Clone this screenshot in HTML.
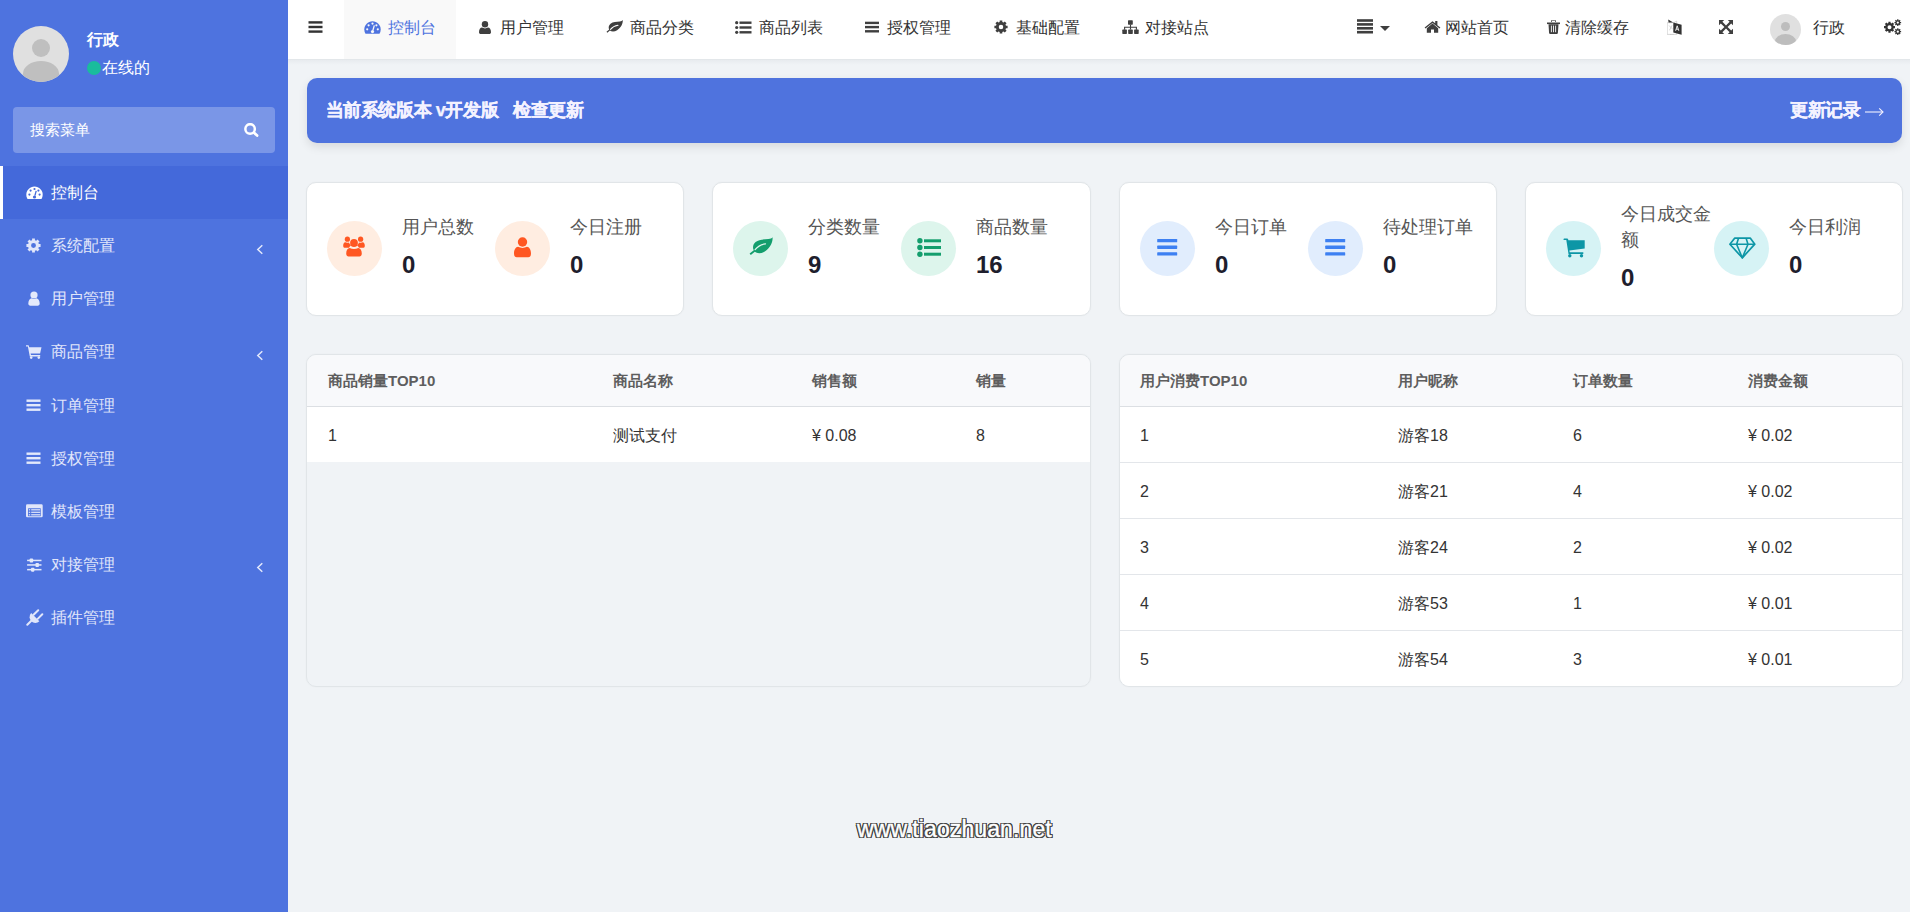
<!DOCTYPE html>
<html><head><meta charset="utf-8">
<style>
*{box-sizing:border-box;margin:0;padding:0}
html,body{width:1910px;height:912px;overflow:hidden}
body{font-family:"Liberation Sans",sans-serif;background:#f0f3f6;position:relative;color:#333}
.abs{position:absolute}
svg{display:block}
/* sidebar */
#side{position:absolute;left:0;top:0;width:288px;height:912px;background:#4e73df}
.avatar{position:absolute;left:13px;top:26px;width:56px;height:56px;border-radius:50%;background:#e0e0e0;overflow:hidden}
.avatar .h{position:absolute;left:19px;top:13px;width:18px;height:18px;border-radius:50%;background:#bfbfbf}
.avatar .b{position:absolute;left:10px;top:35px;width:36px;height:28px;border-radius:50%/45%;background:#bfbfbf}
.uname{position:absolute;left:87px;top:28px;font-size:16px;font-weight:bold;color:#fff;line-height:24px}
.online{position:absolute;left:87px;top:56px;font-size:16px;color:#fff;line-height:24px;white-space:nowrap}
.online i{display:inline-block;width:14px;height:14px;border-radius:50%;background:#1abc9c;vertical-align:-1.5px;margin-right:1px}
.search{position:absolute;left:13px;top:107px;width:262px;height:46px;border-radius:4px;background:rgba(255,255,255,.25)}
.search span{position:absolute;left:17px;top:0;line-height:46px;font-size:15px;color:#fff}
.search svg{position:absolute;left:231px;top:16px}
.menu{position:absolute;left:0;top:166px;width:288px}
.mi{position:relative;height:53.125px;color:#e1e6fa;font-size:16px}
.mi.act{color:#fff}
.mi.act{background:#4469da}
.mi.act:before{content:"";position:absolute;left:0;top:0;width:3px;height:100%;background:#fff}
.mi .ic{position:absolute;left:26px;top:19px}
.mi .tx{position:absolute;left:51px;top:0;line-height:53px}
.mi .ar{position:absolute;left:256px;top:24.5px}
/* header */
#hdr{position:absolute;left:288px;top:0;width:1622px;height:59px;background:#fff}
#hdrline{position:absolute;left:288px;top:59px;width:1622px;height:1px;background:#e3e7ea}
#hdrsh{position:absolute;left:288px;top:60px;width:1622px;height:5px;background:linear-gradient(rgba(0,20,40,.035),rgba(0,20,40,0))}
.tabact{position:absolute;left:344px;top:0;width:112px;height:59px;background:#f9f9f9}
.ht{position:absolute;top:0;line-height:55px;font-size:16px;color:#333;white-space:nowrap}
.hi{position:absolute}
/* banner */
.banner{position:absolute;left:307px;top:78px;width:1595px;height:65px;background:#4f73de;border-radius:10px;box-shadow:0 4px 10px rgba(0,0,0,.10)}
.bt{position:absolute;top:95px;line-height:30px;font-size:18px;font-weight:bold;color:#f4f2ff;white-space:nowrap;letter-spacing:-0.4px;-webkit-text-stroke:0.25px #f4f2ff}
.banner .l{position:absolute;left:20px;top:0;line-height:63px;font-size:18px;font-weight:bold;color:#fff;white-space:nowrap}
.banner .r{position:absolute;right:20px;top:0;line-height:63px;font-size:18px;font-weight:bold;color:#fff;white-space:nowrap}
/* cards */
.card{position:absolute;top:182px;width:378px;height:134px;background:#fff;border:1px solid #e1e5e8;border-radius:10px;box-shadow:0 0 2px rgba(0,0,0,.04)}
.half{position:absolute;top:0;height:100%;width:168px;display:flex;align-items:center}
.circ{width:55px;height:55px;border-radius:50%;flex:none;position:relative;margin-right:20px;top:-0.5px}
.circ svg{position:absolute}
.lab{font-size:18px;color:#555;line-height:25.7px;width:93px}
.num{font-size:24px;font-weight:bold;color:#1e1e2d;line-height:36px;margin-top:6px}
/* tables */
.tcard{position:absolute;top:354px;height:333px;border:1px solid #e1e5e8;box-shadow:0 0 2px rgba(0,0,0,.04);border-radius:10px;overflow:hidden}
.thead{position:absolute;left:0;top:0;width:100%;height:52px;background:#f8f9fb;border-bottom:1px solid #dcdfe3}
.trow{position:absolute;left:0;width:100%;height:56px;background:#fff}
.trow.bd{border-bottom:1px solid #e3e6ea}
.th{position:absolute;top:0;line-height:51px;font-size:15px;font-weight:bold;color:#5e5e5e;white-space:nowrap}
.td{position:absolute;top:1px;line-height:55px;font-size:16px;color:#333;white-space:nowrap}
.wm{position:absolute;left:857px;top:814px;font-size:23px;color:#fff;line-height:30px;white-space:nowrap;letter-spacing:0.1px;-webkit-text-stroke:0.4px #fff;text-shadow:1px 0px 0 #444,-1px 0px 0 #444,0px 1px 0 #444,0px -1px 0 #444,1px 1px 0 #444,-1px -1px 0 #444,1px -1px 0 #444,-1px 1px 0 #444,1.2px 0.6px 0 #444,-1.2px 0.6px 0 #444,0.6px 1.2px 0 #444,0.6px -1.2px 0 #444,-0.6px 1.2px 0 #444,-0.6px -1.2px 0 #444,1.2px -0.6px 0 #444,-1.2px -0.6px 0 #444}
</style></head>
<body>
<div id="side">
  <div class="avatar"><div class="h"></div><div class="b"></div></div>
  <div class="uname">行政</div>
  <div class="online"><i></i>在线的</div>
  <div class="search"><span>搜索菜单</span>
    <svg width="16" height="16" viewBox="0 0 16 16"><circle cx="6.1" cy="5.9" r="4.75" fill="none" stroke="#fff" stroke-width="2.5"/><path d="M9.8 9.6l3.300 3" stroke="#fff" stroke-width="2.7" stroke-linecap="round"/></svg>
  </div>
  <div class="menu">
    <div class="mi act"><svg class="ic" style="top:20.2px" width="17" height="14" viewBox="0 0 17 14"><path d="M8.5 0.5C3.9 0.5 0.3 4.2 0.3 8.7c0 1.6.4 3.1 1.2 4.4h14c.8-1.3 1.2-2.8 1.2-4.4C16.7 4.2 13.1.5 8.5.5z" fill="#fff"/><circle cx="3.4" cy="8.6" r="1.1" fill="#4469da"/><circle cx="4.6" cy="4.6" r="1.1" fill="#4469da"/><circle cx="8.5" cy="3" r="1.1" fill="#4469da"/><circle cx="12.4" cy="4.6" r="1.1" fill="#4469da"/><circle cx="13.6" cy="8.6" r="1.1" fill="#4469da"/><path d="M10.2 4.8L8.9 9.6" stroke="#4469da" stroke-width="1.3"/><circle cx="8.5" cy="11" r="1.6" fill="#4469da"/></svg><span class="tx">控制台</span></div>
    <div class="mi"><svg class="ic" width="15" height="15" viewBox="0 0 16 16"><path fill-rule="evenodd" d="M13.71 6.51 L15.55 6.50 L15.55 9.50 L13.71 9.49 L13.09 10.98 L14.40 12.28 L12.28 14.40 L10.98 13.09 L9.49 13.71 L9.50 15.55 L6.50 15.55 L6.51 13.71 L5.02 13.09 L3.72 14.40 L1.60 12.28 L2.91 10.98 L2.29 9.49 L0.45 9.50 L0.45 6.50 L2.29 6.51 L2.91 5.02 L1.60 3.72 L3.72 1.60 L5.02 2.91 L6.51 2.29 L6.50 0.45 L9.50 0.45 L9.49 2.29 L10.98 2.91 L12.28 1.60 L14.40 3.72 L13.09 5.02Z M10.60 8.00 A2.6 2.6 0 1 0 5.40 8.00 A2.6 2.6 0 1 0 10.60 8.00Z" fill="#e1e6fa"/></svg><span class="tx">系统配置</span><svg class="ar" width="8" height="11" viewBox="0 0 8 11"><path d="M6.3 1.2L1.800 5.500l4.500 4.300" fill="none" stroke="#e3e9fb" stroke-width="1.5"/></svg></div>
    <div class="mi"><svg class="ic" style="left:28px" width="12" height="15" viewBox="0 0 12 15"><circle cx="6" cy="4" r="3.6" fill="#e3e9fb"/><path d="M0.3 12.5c0-3 1.6-5 3.4-5.2 1.5.9 3.1.9 4.6 0 1.8.2 3.4 2.2 3.4 5.2 0 1.4-.9 2.2-2 2.2H2.3C1.2 14.7.3 13.9.3 12.5z" fill="#e3e9fb"/></svg><span class="tx">用户管理</span></div>
    <div class="mi"><svg class="ic" width="16" height="15" viewBox="0 0 16 15"><path d="M0 1.2h2.6l.6 2H15.5l-1.4 6.2H4.6l.4 1.6h9.2v1.4H3.8L1.9 2.6H0z" fill="#e3e9fb"/><circle cx="5.2" cy="13.6" r="1.3" fill="#e3e9fb"/><circle cx="12.8" cy="13.6" r="1.3" fill="#e3e9fb"/></svg><span class="tx">商品管理</span><svg class="ar" width="8" height="11" viewBox="0 0 8 11"><path d="M6.3 1.2L1.800 5.500l4.500 4.300" fill="none" stroke="#e3e9fb" stroke-width="1.5"/></svg></div>
    <div class="mi"><svg class="ic" width="15" height="14" viewBox="0 0 15 14"><rect x="0.5" y="1.5" width="14" height="2.4" fill="#e3e9fb"/><rect x="0.5" y="6" width="14" height="2.4" fill="#e3e9fb"/><rect x="0.5" y="10.5" width="14" height="2.4" fill="#e3e9fb"/></svg><span class="tx">订单管理</span></div>
    <div class="mi"><svg class="ic" width="15" height="14" viewBox="0 0 15 14"><rect x="0.5" y="1.5" width="14" height="2.4" fill="#e3e9fb"/><rect x="0.5" y="6" width="14" height="2.4" fill="#e3e9fb"/><rect x="0.5" y="10.5" width="14" height="2.4" fill="#e3e9fb"/></svg><span class="tx">授权管理</span></div>
    <div class="mi"><svg class="ic" width="17" height="14" viewBox="0 0 17 14"><rect x="0" y="0.3" width="16.7" height="13" rx="1.3" fill="#e1e6fa"/><rect x="2" y="4.3" width="12.8" height="7.9" rx=".4" fill="#4e73df"/><rect x="2.8" y="5.2" width="1.4" height="1.2" fill="#e1e6fa"/><rect x="5.2" y="5.2" width="9" height="1.2" fill="#e1e6fa"/><rect x="2.8" y="7.7" width="1.4" height="1.2" fill="#e1e6fa"/><rect x="5.2" y="7.7" width="9" height="1.2" fill="#e1e6fa"/><rect x="2.8" y="10.2" width="1.4" height="1.2" fill="#e1e6fa"/><rect x="5.2" y="10.2" width="9" height="1.2" fill="#e1e6fa"/></svg><span class="tx">模板管理</span></div>
    <div class="mi"><svg class="ic" width="16" height="16" viewBox="0 0 16 16"><rect x="1.1" y="2.7" width="14.4" height="1.5" fill="#e3e9fb"/><rect x="1.1" y="7.2" width="14.4" height="1.5" fill="#e3e9fb"/><rect x="1.1" y="11.9" width="14.4" height="1.5" fill="#e3e9fb"/><rect x="3.7" y="1.45" width="3.4" height="4" rx=".8" fill="#e3e9fb"/><rect x="9.5" y="5.95" width="3.4" height="4" rx=".8" fill="#e3e9fb"/><rect x="5" y="10.65" width="3.4" height="4" rx=".8" fill="#e3e9fb"/></svg><span class="tx">对接管理</span><svg class="ar" width="8" height="11" viewBox="0 0 8 11"><path d="M6.3 1.2L1.800 5.500l4.500 4.300" fill="none" stroke="#e3e9fb" stroke-width="1.5"/></svg></div>
    <div class="mi"><svg class="ic" style="left:25.5px;top:17.5px" width="18" height="17" viewBox="0 0 18 17"><path d="M1.3 15.7l4-4" stroke="#e1e6fa" stroke-width="2" stroke-linecap="round"/><path d="M5.2 4.1L13.4 12.3A5.8 5.8 0 0 1 5.2 4.1Z" fill="#e1e6fa"/><path d="M7.6 5.8L12.2 1.2M11.7 9.9L16.3 5.3" stroke="#e1e6fa" stroke-width="2" stroke-linecap="round"/></svg><span class="tx">插件管理</span></div>
  </div>
</div>

<div id="hdr"></div>
<div id="hdrline"></div><div id="hdrsh"></div>
<div class="tabact"></div>
<!-- header left -->
<svg class="hi" style="left:308px;top:21px" width="15" height="12" viewBox="0 0 15 12"><rect x="0.5" y="0.2" width="14" height="2.4" fill="#333"/><rect x="0.5" y="4.8" width="14" height="2.4" fill="#333"/><rect x="0.5" y="9.4" width="14" height="2.4" fill="#333"/></svg>
<svg class="hi" style="left:364px;top:21px" width="17" height="13" viewBox="0 0 17 13"><path d="M8.5 0.2C3.9 0.2 0.3 3.9 0.3 8.4c0 1.6.4 3.1 1.2 4.4h14c.8-1.3 1.2-2.8 1.2-4.4C16.7 3.9 13.1.2 8.5.2z" fill="#4e73df"/><circle cx="3.2" cy="8.3" r="1.1" fill="#f9f9f9"/><circle cx="4.6" cy="4.3" r="1.1" fill="#f9f9f9"/><circle cx="8.5" cy="2.6" r="1.1" fill="#f9f9f9"/><circle cx="12.4" cy="4.3" r="1.1" fill="#f9f9f9"/><circle cx="13.8" cy="8.3" r="1.1" fill="#f9f9f9"/><path d="M10.3 4.4L8.9 9.4" stroke="#f9f9f9" stroke-width="1.3"/><circle cx="8.5" cy="10.6" r="1.6" fill="#f9f9f9"/></svg>
<span class="ht" style="left:387.5px;color:#4e73df">控制台</span>
<svg class="hi" style="left:479px;top:21px" width="12" height="13" viewBox="0 0 12 13"><circle cx="6" cy="3.3" r="3.2" fill="#3f3f3f"/><path d="M0 11.2c0-2.8 1.4-4.5 3-4.6 1.9 1.1 4.1 1.1 6 0 1.6.1 3 1.8 3 4.6 0 1.2-.8 1.8-1.8 1.8H1.8C.8 13 0 12.4 0 11.2z" fill="#3f3f3f"/></svg>
<span class="ht" style="left:500px">用户管理</span>
<svg class="hi" style="left:606px;top:20px" width="17" height="13" viewBox="0 0 17 13"><path d="M16.8 0.1c-.6.9-1.6 1.3-3 1.5C10.5 2 7 1.6 4.5 3.8 2.4 5.6 2.3 8.2 3.2 9.6L.5 11.8l.8 1 2.6-2.2c1.6 1.2 4.5 1.4 7.2-.3C15.6 7.500 16.9 3 16.8.1z" fill="#3f3f3f"/><path d="M4.5 9.3C6.5 6.8 9 5.6 12 5.2" stroke="#fff" stroke-width="1.1" fill="none" stroke-linecap="round"/></svg>
<span class="ht" style="left:629.5px">商品分类</span>
<svg class="hi" style="left:735px;top:21px" width="17" height="13" viewBox="0 0 17 13"><circle cx="1.7" cy="1.7" r="1.6" fill="#3f3f3f"/><circle cx="1.7" cy="6.5" r="1.6" fill="#3f3f3f"/><circle cx="1.7" cy="11.3" r="1.6" fill="#3f3f3f"/><rect x="4.5" y="0.5" width="12" height="2.4" fill="#3f3f3f"/><rect x="4.5" y="5.3" width="12" height="2.4" fill="#3f3f3f"/><rect x="4.5" y="10.1" width="12" height="2.4" fill="#3f3f3f"/></svg>
<span class="ht" style="left:758.5px">商品列表</span>
<svg class="hi" style="left:865px;top:21px" width="14" height="12" viewBox="0 0 14 12"><rect x="0" y="0.7" width="14" height="2.4" fill="#3f3f3f"/><rect x="0" y="4.9" width="14" height="2.4" fill="#3f3f3f"/><rect x="0" y="9.1" width="14" height="2.4" fill="#3f3f3f"/></svg>
<span class="ht" style="left:887px">授权管理</span>
<svg class="hi" style="left:994px;top:20px" width="14" height="14" viewBox="0 0 16 16"><path fill-rule="evenodd" d="M13.71 6.51 L15.55 6.50 L15.55 9.50 L13.71 9.49 L13.09 10.98 L14.40 12.28 L12.28 14.40 L10.98 13.09 L9.49 13.71 L9.50 15.55 L6.50 15.55 L6.51 13.71 L5.02 13.09 L3.72 14.40 L1.60 12.28 L2.91 10.98 L2.29 9.49 L0.45 9.50 L0.45 6.50 L2.29 6.51 L2.91 5.02 L1.60 3.72 L3.72 1.60 L5.02 2.91 L6.51 2.29 L6.50 0.45 L9.50 0.45 L9.49 2.29 L10.98 2.91 L12.28 1.60 L14.40 3.72 L13.09 5.02Z M10.60 8.00 A2.6 2.6 0 1 0 5.40 8.00 A2.6 2.6 0 1 0 10.60 8.00Z" fill="#3f3f3f"/></svg>
<span class="ht" style="left:1016px">基础配置</span>
<svg class="hi" style="left:1121.5px;top:20px" width="17" height="14" viewBox="0 0 17 14"><rect x="6" y="0.3" width="4.8" height="4.4" rx=".6" fill="#3f3f3f"/><rect x="0.3" y="9.6" width="4.6" height="4.3" rx=".6" fill="#3f3f3f"/><rect x="6.2" y="9.6" width="4.6" height="4.3" rx=".6" fill="#3f3f3f"/><rect x="12.1" y="9.6" width="4.6" height="4.3" rx=".6" fill="#3f3f3f"/><path d="M8.5 4.5v5M2.6 9.8V7.2h11.8v2.6" stroke="#3f3f3f" stroke-width="1.1" fill="none"/></svg>
<span class="ht" style="left:1144.5px">对接站点</span>
<!-- header right -->
<svg class="hi" style="left:1357px;top:19px" width="16" height="15" viewBox="0 0 16 15"><rect x="0" y="0.2" width="16" height="2.6" fill="#3f3f3f"/><rect x="0" y="4.1" width="16" height="2.6" fill="#3f3f3f"/><rect x="0" y="8" width="16" height="2.6" fill="#3f3f3f"/><rect x="0" y="11.9" width="16" height="2.6" fill="#3f3f3f"/></svg>
<svg class="hi" style="left:1380px;top:26px" width="10" height="5" viewBox="0 0 10 5"><path d="M0 0h10L5 5z" fill="#3f3f3f"/></svg>
<svg class="hi" style="left:1424px;top:20px" width="17" height="13" viewBox="0 0 17 13"><path d="M8.5 1.2L.6 7.6l.9 1L8.5 3l7 5.6.9-1-3-2.4V1h-2.2v2.3z" fill="#3f3f3f"/><path d="M2.8 8.2L8.5 3.6l5.7 4.6v4.6H10V9.4H7v3.4H2.8z" fill="#3f3f3f"/></svg>
<span class="ht" style="left:1444.5px">网站首页</span>
<svg class="hi" style="left:1547px;top:20px" width="13" height="14" viewBox="0 0 13 14"><path d="M4.5 1.8V1c0-.5.4-.9.9-.9h2.2c.5 0 .9.4.9.9v.8" stroke="#3f3f3f" stroke-width="1" fill="none"/><rect x="0" y="2.5" width="13" height="1.6" fill="#3f3f3f"/><path d="M1.5 4.2h10l-.6 8.7c-.1.6-.5 1-1.1 1H3.2c-.6 0-1-.4-1.1-1z" fill="#3f3f3f"/><path d="M4.4 5.6v6.6M6.5 5.6v6.6M8.6 5.6v6.6" stroke="#fff" stroke-width=".9"/></svg>
<span class="ht" style="left:1564.5px">清除缓存</span>
<svg class="hi" style="left:1667px;top:19px" width="15" height="16" viewBox="0 0 15 16"><path d="M0.2 3.7h6.5l3-1.6v13.3H.2z" fill="none" stroke="#bbb" stroke-width=".6"/><path d="M6.3 3.5L1.2 0.6l.4 3z" fill="#333"/><path d="M6.3 3.5l8.3 2.3v10L6.3 13.5z" fill="#333"/><path d="M8.6 11.8l1.6-5 1.6 5M9.2 10.2h2" stroke="#fff" stroke-width=".9" fill="none"/><path d="M2 6.5l4 4M5 6.3l-2.5 5" stroke="#aaa" stroke-width=".5"/><path d="M3 15.2c1 .8 2.6.8 3.7.2" stroke="#bbb" stroke-width=".5" fill="none"/></svg>
<svg class="hi" style="left:1718.5px;top:20px" width="14" height="14" viewBox="0 0 14 14"><path d="M0 0h5.2L3.4 1.8 7 5.4l3.6-3.6L8.8 0H14v5.2l-1.8-1.8L8.6 7l3.6 3.6 1.8-1.8V14H8.8l1.8-1.8L7 8.6l-3.6 3.6L5.2 14H0V8.8l1.8 1.8L5.4 7 1.8 3.4 0 5.2z" fill="#3f3f3f"/></svg>
<div class="abs" style="left:1770px;top:14px;width:31px;height:31px;border-radius:50%;background:#e0e0e0;overflow:hidden"><div class="abs" style="left:10.5px;top:7.5px;width:9.5px;height:9.5px;border-radius:50%;background:#bdbdbd"></div><div class="abs" style="left:5px;top:19.5px;width:21px;height:15px;border-radius:50%;background:#bdbdbd"></div></div>
<span class="ht" style="left:1813px">行政</span>
<svg class="hi" style="left:1884px;top:19px" width="18" height="17" viewBox="0 0 18 17"><path fill-rule="evenodd" d="M9.66 7.11 L10.99 7.11 L10.99 9.29 L9.66 9.29 L9.21 10.37 L10.16 11.31 L8.61 12.86 L7.67 11.91 L6.59 12.36 L6.59 13.69 L4.41 13.69 L4.41 12.36 L3.33 11.91 L2.39 12.86 L0.84 11.31 L1.79 10.37 L1.34 9.29 L0.01 9.29 L0.01 7.11 L1.34 7.11 L1.79 6.03 L0.84 5.09 L2.39 3.54 L3.33 4.49 L4.41 4.04 L4.41 2.71 L6.59 2.71 L6.59 4.04 L7.67 4.49 L8.61 3.54 L10.16 5.09 L9.21 6.03Z M7.50 8.20 A2.0 2.0 0 1 0 3.50 8.20 A2.0 2.0 0 1 0 7.50 8.20Z M16.22 2.97 L17.13 2.94 L17.13 4.26 L16.22 4.23 L15.96 4.86 L16.63 5.49 L15.69 6.43 L15.06 5.76 L14.43 6.02 L14.46 6.93 L13.14 6.93 L13.17 6.02 L12.54 5.76 L11.91 6.43 L10.97 5.49 L11.64 4.86 L11.38 4.23 L10.47 4.26 L10.47 2.94 L11.38 2.97 L11.64 2.34 L10.97 1.71 L11.91 0.77 L12.54 1.44 L13.17 1.18 L13.14 0.27 L14.46 0.27 L14.43 1.18 L15.06 1.44 L15.69 0.77 L16.63 1.71 L15.96 2.34Z M14.95 3.60 A1.15 1.15 0 1 0 12.65 3.60 A1.15 1.15 0 1 0 14.95 3.60Z M16.22 12.07 L17.13 12.04 L17.13 13.36 L16.22 13.33 L15.96 13.96 L16.63 14.59 L15.69 15.53 L15.06 14.86 L14.43 15.12 L14.46 16.03 L13.14 16.03 L13.17 15.12 L12.54 14.86 L11.91 15.53 L10.97 14.59 L11.64 13.96 L11.38 13.33 L10.47 13.36 L10.47 12.04 L11.38 12.07 L11.64 11.44 L10.97 10.81 L11.91 9.87 L12.54 10.54 L13.17 10.28 L13.14 9.37 L14.46 9.37 L14.43 10.28 L15.06 10.54 L15.69 9.87 L16.63 10.81 L15.96 11.44Z M14.95 12.70 A1.15 1.15 0 1 0 12.65 12.70 A1.15 1.15 0 1 0 14.95 12.70Z" fill="#333"/></svg>

<!-- banner -->
<div class="banner"></div>
<span class="bt" style="left:325.5px">当前系统版本 v开发版</span><span class="bt" style="left:513px">检查更新</span><span class="bt" style="left:1790px">更新记录</span>
<svg class="abs" style="left:1864.5px;top:107.5px" width="19" height="8" viewBox="0 0 19 8"><path d="M0 4h17.6" stroke="#f3f1ff" stroke-width="1.1"/><path d="M14.2 .4L18 4l-3.8 3.6" stroke="#f3f1ff" stroke-width="1.1" fill="none"/></svg>

<!-- cards -->
<div class="card" style="left:306px">
  <div class="half" style="left:20px"><div class="circ" style="background:#ffede1"><svg style="left:16px;top:14.5px" width="22" height="21" viewBox="0 0 22 21"><circle cx="4.4" cy="3.2" r="2.6" fill="#ff5722"/><circle cx="17.6" cy="3.2" r="2.6" fill="#ff5722"/><path d="M0.2 9.5c0-1.8.9-3 2-3.2 1.3.6 2.6.6 3.8.1.3 1.1 1 2.2 2 2.9-.9.6-1.6 1.6-2 2.4H1.4C.7 11.7.2 11 .2 9.5z" fill="#ff5722"/><path d="M21.8 9.5c0-1.8-.9-3-2-3.2-1.3.6-2.6.6-3.8.1-.3 1.1-1 2.2-2 2.9.9.6 1.6 1.6 2 2.4h4.6c.7 0 1.2-.7 1.2-2.2z" fill="#ff5722"/><circle cx="11" cy="7" r="3.9" fill="#ff5722"/><path d="M3.2 17.6c0-3.500 1.6-5.500 3.5-5.700 2.6 1.300 6 1.300 8.6 0 1.900.2 3.500 2.200 3.500 5.700 0 1.900-1 2.900-2.300 2.900H5.500c-1.300 0-2.300-1-2.300-2.900z" fill="#ff5722"/></svg></div><div><div class="lab">用户总数</div><div class="num">0</div></div></div>
  <div class="half" style="left:188px"><div class="circ" style="background:#ffede1"><svg style="left:19px;top:15.5px" width="17" height="21" viewBox="0 0 17 21"><circle cx="8.5" cy="5" r="4.7" fill="#ff5722"/><path d="M0 16.6c0-4.200 1.800-6.500 4-6.800 2.800 1.500 6.200 1.500 9 0 2.200.3 4 2.600 4 6.800 0 2.400-1.200 3.600-2.700 3.600H2.700C1.200 20.200 0 19 0 16.6z" fill="#ff5722"/></svg></div><div><div class="lab">今日注册</div><div class="num">0</div></div></div>
</div>
<div class="card" style="left:712px;width:379px">
  <div class="half" style="left:20px"><div class="circ" style="background:#ddf5ec"><svg style="left:16px;top:15.5px" width="24" height="19" viewBox="0 0 24 19"><path d="M23.6 0.3c-.8 1.100-2.200 1.600-4.100 1.800C14.800 2.600 10 2.100 6.600 5.100 3.700 7.600 3.500 11.200 4.800 13.200L.6 16.400l1.200 1.500 4-3.100c2.300 1.700 6.300 2 10-.4 6.300-4.100 8-10.200 7.800-14.100z" fill="#139e6d"/><path d="M6.100 12.600C8.800 9.300 12.200 7.400 16.500 6.800" stroke="#ddf5ec" stroke-width="1.3" fill="none" stroke-linecap="round"/></svg></div><div><div class="lab">分类数量</div><div class="num">9</div></div></div>
  <div class="half" style="left:188px"><div class="circ" style="background:#ddf5ec"><svg style="left:16px;top:16.5px" width="24" height="19" viewBox="0 0 24 19"><circle cx="2.900" cy="2.800" r="2.700" fill="#139e6d"/><circle cx="2.900" cy="9.500" r="2.700" fill="#139e6d"/><circle cx="2.900" cy="16.200" r="2.700" fill="#139e6d"/><rect x="7" y="1.300" width="17" height="3" fill="#139e6d"/><rect x="7" y="8" width="17" height="3" fill="#139e6d"/><rect x="7" y="14.700" width="17" height="3" fill="#139e6d"/></svg></div><div><div class="lab">商品数量</div><div class="num">16</div></div></div>
</div>
<div class="card" style="left:1119px">
  <div class="half" style="left:20px"><div class="circ" style="background:#e1edfd"><svg style="left:17px;top:17.5px" width="21" height="17" viewBox="0 0 21 17"><rect x="0.200" y="0" width="20" height="3.300" rx=".6" fill="#3d80f2"/><rect x="0.200" y="6.600" width="20" height="3.300" rx=".6" fill="#3d80f2"/><rect x="0.200" y="13.300" width="20" height="3.300" rx=".6" fill="#3d80f2"/></svg></div><div><div class="lab">今日订单</div><div class="num">0</div></div></div>
  <div class="half" style="left:188px"><div class="circ" style="background:#e1edfd"><svg style="left:17px;top:17.5px" width="21" height="17" viewBox="0 0 21 17"><rect x="0.200" y="0" width="20" height="3.300" rx=".6" fill="#3d80f2"/><rect x="0.200" y="6.600" width="20" height="3.300" rx=".6" fill="#3d80f2"/><rect x="0.200" y="13.300" width="20" height="3.300" rx=".6" fill="#3d80f2"/></svg></div><div><div class="lab">待处理订单</div><div class="num">0</div></div></div>
</div>
<div class="card" style="left:1525px">
  <div class="half" style="left:20px"><div class="circ" style="background:#d6f3f5"><svg style="left:16.500px;top:17px" width="23" height="20" viewBox="0 0 23 20"><path d="M.5 1.500c0-.600.400-1 1-1h2.600c.600 0 1 .300 1.100.900l.200 .800h16.300v8.200l-15.300 2.200.300 1.700h13.600v1.600H5.500L3.300 2.100H1.500C.9 2.100.5 2.100.5 1.500z" fill="#0d96a6"/><circle cx="6.800" cy="17.800" r="1.700" fill="#0d96a6"/><circle cx="18.500" cy="17.800" r="1.700" fill="#0d96a6"/></svg></div><div><div class="lab">今日成交金额</div><div class="num">0</div></div></div>
  <div class="half" style="left:188px"><div class="circ" style="background:#d6f3f5"><svg style="left:15px;top:15.500px" width="27" height="22" viewBox="0 0 27 22"><path d="M5.600 1.200h15.800l4.400 6L13.300 20.800.9 7.200z" fill="none" stroke="#0d96a6" stroke-width="1.700" stroke-linejoin="round"/><path d="M1 7.200h25M9.500 1.200L7.600 7.200l5.700 13.600 5.700-13.600-1.900-6" fill="none" stroke="#0d96a6" stroke-width="1.600" stroke-linejoin="round"/></svg></div><div><div class="lab">今日利润</div><div class="num">0</div></div></div>
</div>

<!-- tables -->
<div class="tcard" style="left:306px;width:785px">
  <div class="thead"><span class="th" style="left:21px">商品销量TOP10</span><span class="th" style="left:306px">商品名称</span><span class="th" style="left:505px">销售额</span><span class="th" style="left:669px">销量</span></div>
  <div class="trow" style="top:52px;height:55px"><span class="td" style="left:21px">1</span><span class="td" style="left:306px">测试支付</span><span class="td" style="left:505px">¥ 0.08</span><span class="td" style="left:669px">8</span></div>
</div>
<div class="tcard" style="left:1119px;width:784px">
  <div class="thead"><span class="th" style="left:20px">用户消费TOP10</span><span class="th" style="left:278px">用户昵称</span><span class="th" style="left:453px">订单数量</span><span class="th" style="left:628px">消费金额</span></div>
  <div class="trow bd" style="top:52px"><span class="td" style="left:20px">1</span><span class="td" style="left:278px">游客18</span><span class="td" style="left:453px">6</span><span class="td" style="left:628px">¥ 0.02</span></div>
  <div class="trow bd" style="top:108px"><span class="td" style="left:20px">2</span><span class="td" style="left:278px">游客21</span><span class="td" style="left:453px">4</span><span class="td" style="left:628px">¥ 0.02</span></div>
  <div class="trow bd" style="top:164px"><span class="td" style="left:20px">3</span><span class="td" style="left:278px">游客24</span><span class="td" style="left:453px">2</span><span class="td" style="left:628px">¥ 0.02</span></div>
  <div class="trow bd" style="top:220px"><span class="td" style="left:20px">4</span><span class="td" style="left:278px">游客53</span><span class="td" style="left:453px">1</span><span class="td" style="left:628px">¥ 0.01</span></div>
  <div class="trow" style="top:276px"><span class="td" style="left:20px">5</span><span class="td" style="left:278px">游客54</span><span class="td" style="left:453px">3</span><span class="td" style="left:628px">¥ 0.01</span></div>
</div>

<div class="wm">www.tiaozhuan.net</div>
</body></html>
